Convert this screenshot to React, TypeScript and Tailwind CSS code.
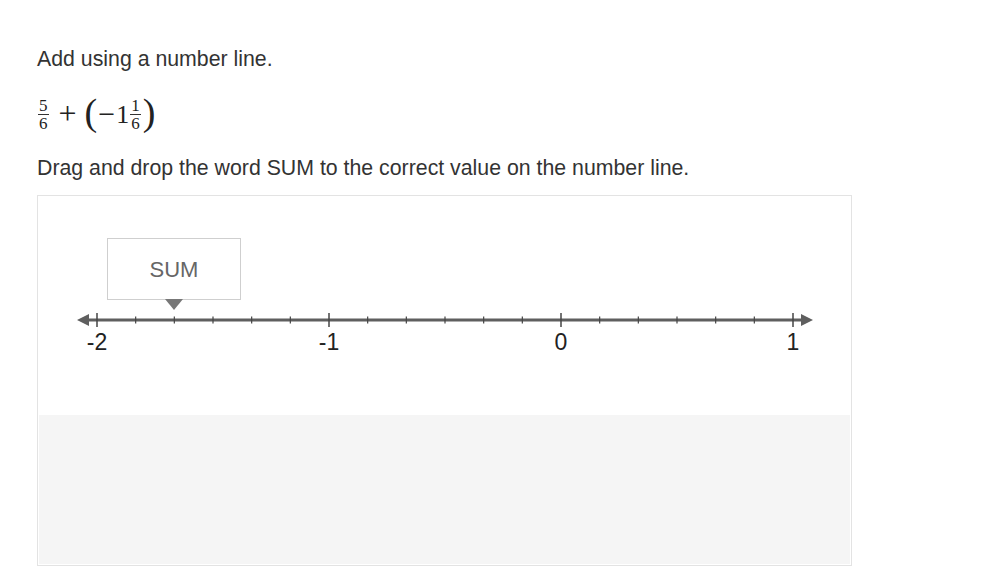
import React from "react";

const sans = { fontFamily: '"Liberation Sans", Arial, sans-serif' };
const serif = { fontFamily: '"Liberation Serif", "DejaVu Serif", serif' };

function Frac({ n, d }: { n: string; d: string }) {
  return (
    <span className="inline-flex flex-col items-center align-middle mx-[1px] text-[17px] leading-[15px]">
      <span className="px-[1px]">{n}</span>
      <span className="block w-full h-px bg-[#333] my-[1px]"></span>
      <span className="px-[1px]">{d}</span>
    </span>
  );
}

function NumberLine() {
  const y = 124;
  const x0 = 59;
  const unit = 232;
  const ticks: number[] = [];
  for (let i = 0; i <= 18; i++) ticks.push(i);
  const labels = ["-2", "-1", "0", "1"];
  return (
    <svg width="813" height="219" className="block">
      <line x1={46} y1={y} x2={766} y2={y} stroke="#5f5f5f" strokeWidth={2.8} />
      <polygon points={`39,${y} 51,${y - 6} 51,${y + 6}`} fill="#5f5f5f" />
      <polygon points={`775,${y} 763,${y - 6} 763,${y + 6}`} fill="#5f5f5f" />
      {ticks.map((i) => {
        const x = x0 + (i * unit) / 6;
        const major = i % 6 === 0;
        return (
          <line
            key={i}
            x1={x}
            x2={x}
            y1={major ? y - 7 : y - 3.5}
            y2={major ? y + 7 : y + 3.5}
            stroke="#444"
            strokeWidth={major ? 1.5 : 1.2}
          />
        );
      })}
      {labels.map((l, k) => (
        <text
          key={l}
          x={x0 + k * unit}
          y={y + 30}
          textAnchor="middle"
          fontSize="23"
          fill="#222"
          style={sans}
        >
          {l}
        </text>
      ))}
    </svg>
  );
}

export default function App() {
  return (
    <div className="min-h-[586px] bg-white pl-[37px] pt-[45px] text-[#333]" style={sans}>
      <p className="text-[21.3px] leading-[28px]">Add using a number line.</p>
      <div className="mt-[23px] h-[36px] flex items-center text-[26px] text-[#222]" style={serif}>
        <Frac n="5" d="6" />
        <span className="ml-[9px] mr-[8px] text-[32px] leading-none font-light -translate-y-[1px]">+</span>
        <span className="text-[38px] leading-none inline-block -translate-y-[2px]">(</span>
        <span className="ml-[1px] text-[30px] leading-none">−</span>
        <span className="ml-[1px]">1</span>
        <Frac n="1" d="6" />
        <span className="text-[38px] leading-none inline-block -translate-y-[2px] ml-[1px]">)</span>
      </div>
      <p className="mt-[22px] text-[21.3px] leading-[28px]">
        Drag and drop the word SUM to the correct value on the number line.
      </p>
      <div className="mt-[13px] w-[815px] border border-[#e3e3e3] bg-white">
        <div className="relative h-[219px]">
          <NumberLine />
          <div className="absolute left-[69px] top-[42px] w-[134px] h-[62px] border border-[#cfcfcf] bg-white flex items-center justify-center text-[22px] text-[#666]">
            SUM
          </div>
          <div className="absolute left-[127px] top-[103px] w-0 h-0 border-l-[9px] border-r-[9px] border-t-[11px] border-l-transparent border-r-transparent border-t-[#777]"></div>
        </div>
        <div className="mx-px mb-px h-[149px] bg-[#f5f5f5]"></div>
      </div>
    </div>
  );
}
